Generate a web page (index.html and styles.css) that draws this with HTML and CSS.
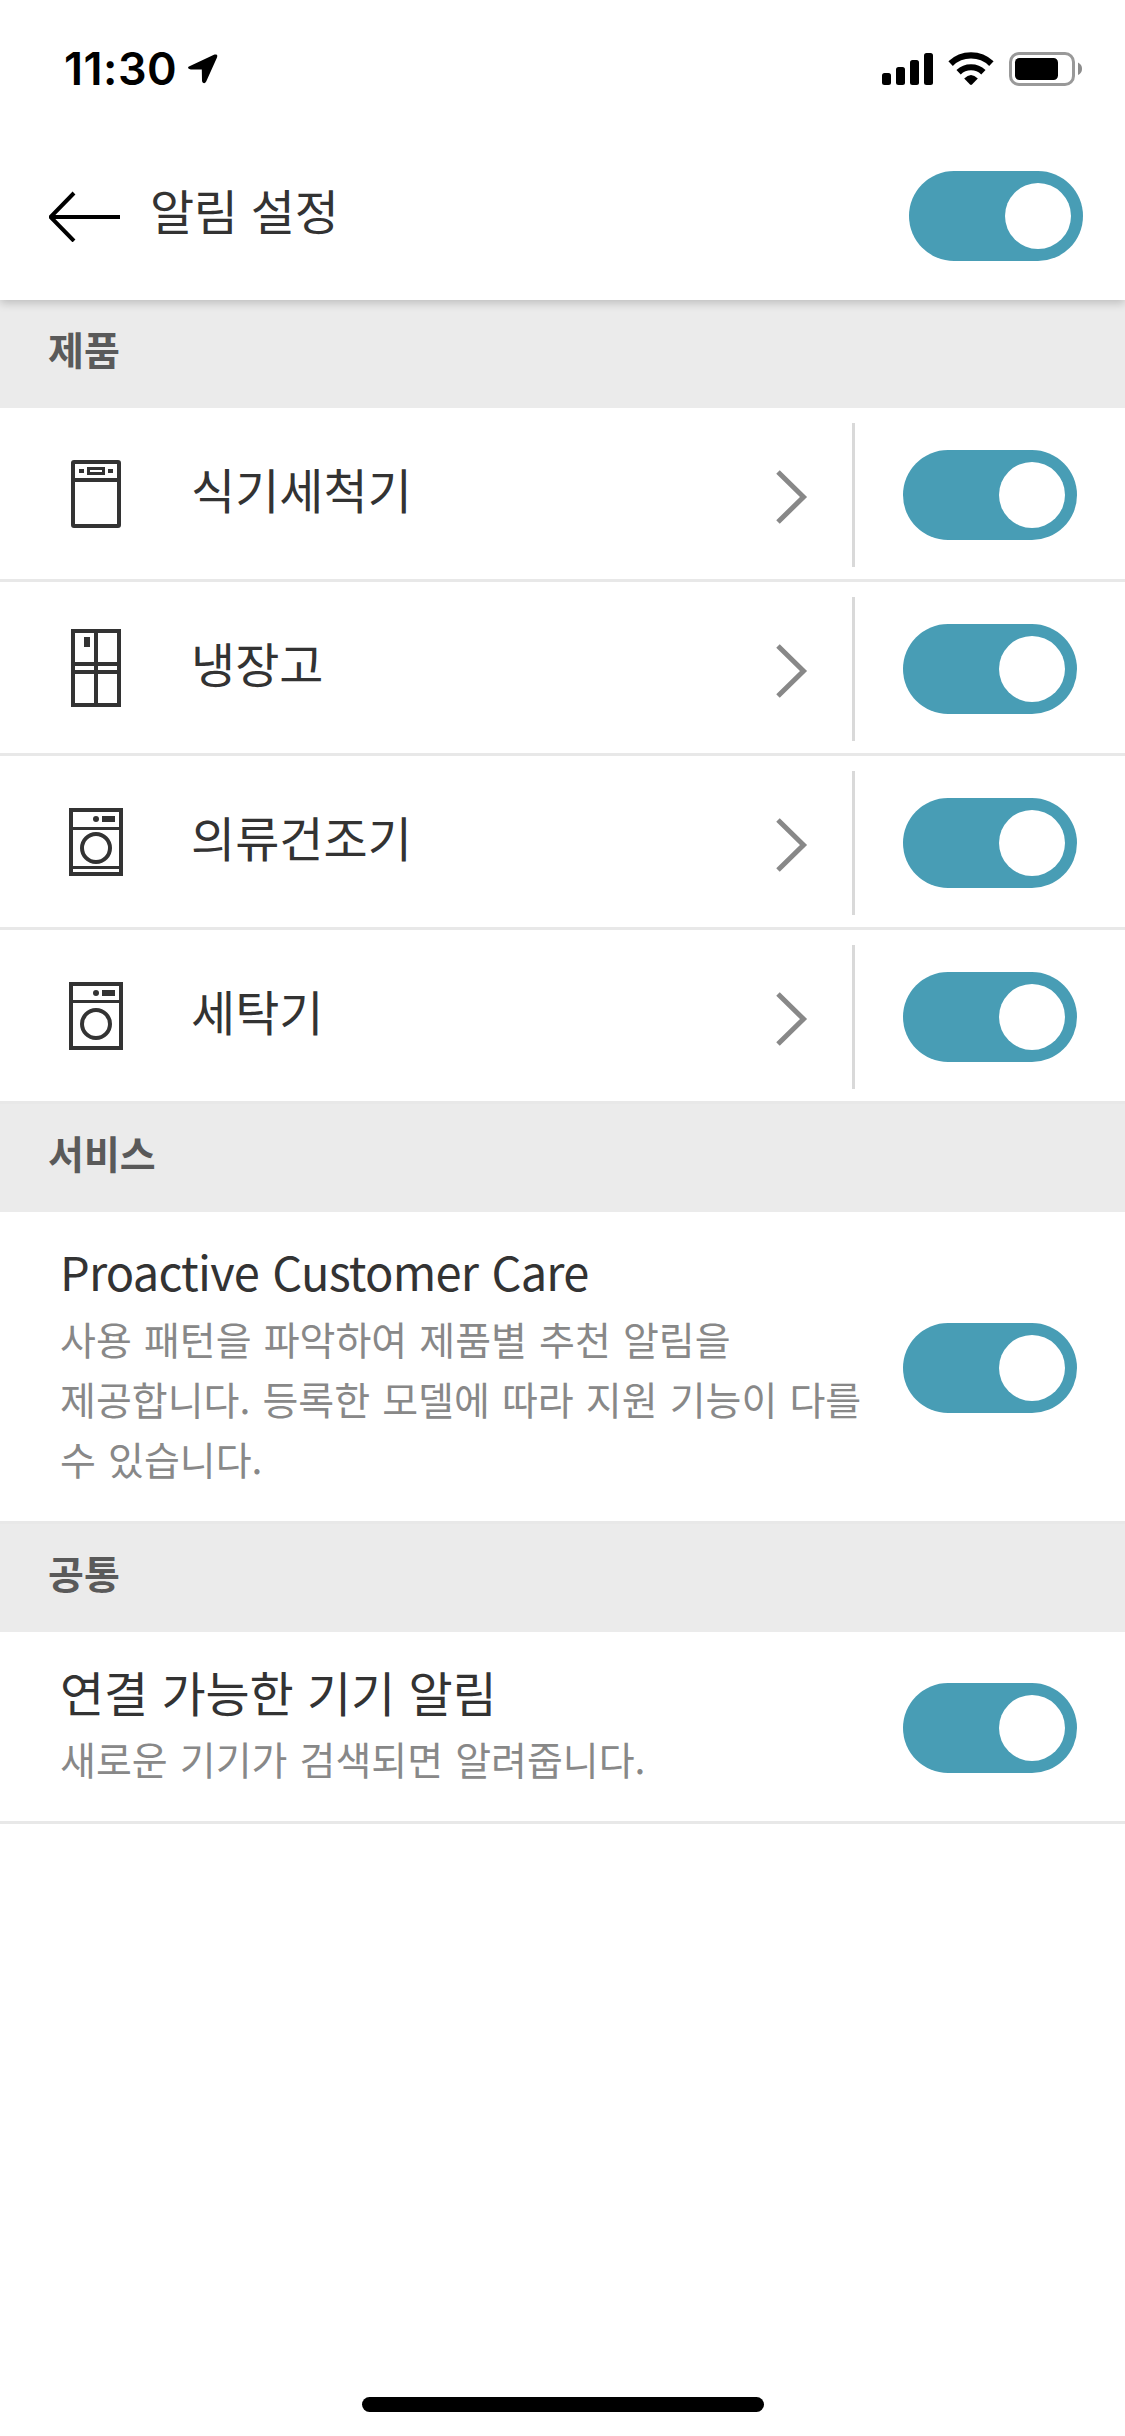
FILE: index.html
```html
<!DOCTYPE html>
<html lang="ko">
<head>
    <meta charset="UTF-8">
    <meta name="viewport" content="width=device-width, initial-scale=1.0">
    <title>알림 설정</title>
    <link rel="stylesheet" href="styles.css">
</head>
<body>
    <div class="status-bar">
        <div class="status-left">
            <span class="time">11:30</span>
            <svg class="location" width="30" height="30" viewBox="0 0 30 30"><path d="M2 12 L26.5 0.6 Q30.2 -0.4 29 3.4 L18.2 27.6 Q16.8 30 14.9 28.8 Q14 28 14 26.5 L13.8 15.6 L2.8 15.4 Q0 15.2 0 13.6 Q0 12.8 2 12 Z"/></svg>
        </div>
        <div class="status-right">
            <svg width="51" height="34" viewBox="0 0 51 34">
                <rect x="0" y="21" width="9" height="12" rx="2.5"/>
                <rect x="14" y="15" width="9" height="18" rx="2.5"/>
                <rect x="28" y="8" width="9" height="25" rx="2.5"/>
                <rect x="42" y="1" width="9" height="32" rx="2.5"/>
            </svg>
            <svg width="46" height="34" viewBox="0 0 46 34">
                <path d="M2.6 11.6 A29.5 29.5 0 0 1 43.4 11.6" fill="none" stroke="#000" stroke-width="6.4"/>
                <path d="M10.6 20.2 A18 18 0 0 1 35.4 20.2" fill="none" stroke="#000" stroke-width="6.2"/>
                <path d="M16.2 26.6 Q23 19.6 29.8 26.6 L24 32.5 Q23 33.3 22 32.5 Z"/>
            </svg>
            <svg width="73" height="34" viewBox="0 0 73 34">
                <rect x="1.5" y="1.5" width="63" height="31" rx="8.5" fill="none" stroke="#999" stroke-width="3"/>
                <rect x="6" y="6" width="43" height="22" rx="4.5"/>
                <path d="M69 10.5 Q73 12.5 73 16.7 Q73 21 69 23 Z" fill="#8c8c8c"/>
            </svg>
        </div>
    </div>

    <header class="header">
        <svg class="back" width="72" height="52" viewBox="0 0 72 52"><path d="M71 27 H3 M25 3 L1.5 27 L25 51" fill="none" stroke="#000" stroke-width="4"/></svg>
        <h1 class="title">알림 설정</h1>
        <span class="toggle"></span>
    </header>

    <main>
        <h2 class="section">제품</h2>
        <ul class="list">
            <li class="row">
                <svg class="icon" width="60" height="84" viewBox="0 0 60 84">
                    <rect x="7" y="9" width="46" height="64" rx="1" class="line"/>
                    <path d="M7 27 H53" class="line"/>
                    <rect x="22.5" y="15.5" width="15" height="5" class="line thin"/>
                    <path d="M13 16 h5 v4 h-5 z M42 16 h5 v4 h-5 z"/>
                </svg>
                <span class="name">식기세척기</span>
                <svg class="arrow" width="32" height="54" viewBox="0 0 32 54"><path d="M2 2 L27.5 27 L2 52" /></svg>
                <span class="divider"></span>
                <span class="toggle"></span>
            </li>
            <li class="row">
                <svg class="icon" width="60" height="84" viewBox="0 0 60 84">
                    <rect x="7" y="4" width="46" height="74" class="line"/>
                    <path d="M30 4 V78 M7 37 H53 M7 45 H53" class="line"/>
                    <rect x="18" y="10" width="6" height="10"/>
                </svg>
                <span class="name">냉장고</span>
                <svg class="arrow" width="32" height="54" viewBox="0 0 32 54"><path d="M2 2 L27.5 27 L2 52" /></svg>
                <span class="divider"></span>
                <span class="toggle"></span>
            </li>
            <li class="row">
                <svg class="icon" width="60" height="84" viewBox="0 0 60 84">
                    <rect x="5" y="9" width="50" height="64" class="line"/>
                    <path d="M5 27.5 H55 M5 66.5 H55" class="line thin"/>
                    <circle cx="30" cy="47" r="14" class="line"/>
                    <circle cx="30" cy="18" r="3"/>
                    <rect x="36" y="15" width="13" height="6"/>
                </svg>
                <span class="name">의류건조기</span>
                <svg class="arrow" width="32" height="54" viewBox="0 0 32 54"><path d="M2 2 L27.5 27 L2 52" /></svg>
                <span class="divider"></span>
                <span class="toggle"></span>
            </li>
            <li class="row">
                <svg class="icon" width="60" height="84" viewBox="0 0 60 84">
                    <rect x="5" y="9" width="50" height="64" class="line"/>
                    <path d="M5 26.5 H55" class="line thin"/>
                    <circle cx="30" cy="49" r="14" class="line"/>
                    <circle cx="30" cy="18" r="3"/>
                    <rect x="36" y="15" width="13" height="6"/>
                </svg>
                <span class="name">세탁기</span>
                <svg class="arrow" width="32" height="54" viewBox="0 0 32 54"><path d="M2 2 L27.5 27 L2 52" /></svg>
                <span class="divider"></span>
                <span class="toggle"></span>
            </li>
        </ul>

        <h2 class="section">서비스</h2>
        <div class="row setting">
            <div class="text">
                <h3 class="latin">Proactive Customer Care</h3>
                <p>사용 패턴을 파악하여 제품별 추천 알림을<br>제공합니다. 등록한 모델에 따라 지원 기능이 다를<br>수 있습니다.</p>
            </div>
            <span class="toggle"></span>
        </div>

        <h2 class="section">공통</h2>
        <div class="row setting">
            <div class="text">
                <h3>연결 가능한 기기 알림</h3>
                <p>새로운 기기가 검색되면 알려줍니다.</p>
            </div>
            <span class="toggle"></span>
        </div>
    </main>

    <div class="home-bar"></div>
</body>
</html>
```

FILE: styles.css
```css
* {
    box-sizing: border-box;
    margin: 0;
    padding: 0;
}

body {
    display: flex;
    flex-direction: column;
    height: 2436px;
    background-color: #fff;
    color: #333;
    font-family: "Noto Sans CJK KR", sans-serif;
    font-size: 48px;
}

svg {
    display: block;
    flex-shrink: 0;
}

/* Status bar */
.status-bar {
    position: relative;
    z-index: 2;
    display: flex;
    justify-content: space-between;
    height: 132px;
    padding: 52px 43px 0 64px;
    background-color: #fff;
}

.status-left, .status-right {
    display: flex;
    align-items: flex-start;
}

.status-right {
    gap: 15px;
}

.time {
    width: 113px;
    color: #000;
    font-family: Inter, sans-serif;
    font-size: 45px;
    font-weight: 600;
    letter-spacing: 0.5px;
    line-height: 34px;
    white-space: nowrap;
}

.location {
    margin: 2px 0 0 11px;
}

/* Header */
.header {
    position: relative;
    z-index: 1;
    display: flex;
    align-items: center;
    height: 168px;
    padding: 0 42px 0 49px;
    background-color: #fff;
    box-shadow: 0 3px 9px rgba(0, 0, 0, 0.2);
}

.title {
    flex: 1;
    margin-left: 29px;
    padding-bottom: 14px;
    font-size: 48px;
    font-weight: 400;
    letter-spacing: -0.3px;
    line-height: 60px;
}

/* Toggle */
.toggle {
    display: flex;
    flex-shrink: 0;
    justify-content: flex-end;
    width: 174px;
    height: 90px;
    padding: 12px;
    border-radius: 45px;
    background-color: #489db5;
}

.toggle::after {
    content: "";
    width: 66px;
    height: 66px;
    border-radius: 50%;
    background-color: #fff;
}

/* Lists */
.section {
    height: 108px;
    padding: 0 48px;
    background-color: #ebebeb;
    color: #5a5a5a;
    font-size: 39px;
    font-weight: 700;
    line-height: 97px;
}

.list {
    list-style: none;
}

.row {
    display: flex;
    align-items: center;
    height: 174px;
    padding: 3px 48px 0 66px;
    border-bottom: 3px solid #e8e8e8;
}

.icon {
    fill: #333;
}

.line {
    fill: none;
    stroke: #333;
    stroke-width: 4;
}

.thin {
    stroke-width: 3;
}

.name {
    flex: 1;
    margin-left: 65px;
    padding-bottom: 14px;
    line-height: 60px;
}

.arrow {
    margin: 4px 44px 0 0;
    fill: none;
    stroke: #888;
    stroke-width: 5;
}

.divider {
    width: 3px;
    height: 144px;
    margin-right: 48px;
    background-color: #d9d9d9;
}

.setting {
    height: auto;
    padding-left: 60px;
}

.text {
    flex: 1;
    padding: 26px 0 33px;
    white-space: nowrap;
}

.text h3 {
    margin-bottom: 7px;
    font-size: 48px;
    font-weight: 400;
    letter-spacing: -0.1px;
    line-height: 60px;
}

.text .latin {
    font-size: 47px;
    letter-spacing: -0.8px;
    word-spacing: 1px;
}

.text p {
    color: #888;
    font-size: 39px;
    line-height: 60px;
    word-spacing: 1.2px;
}

.home-bar {
    width: 402px;
    height: 15px;
    margin: auto auto 24px;
    border-radius: 8px;
    background-color: #000;
}
```
